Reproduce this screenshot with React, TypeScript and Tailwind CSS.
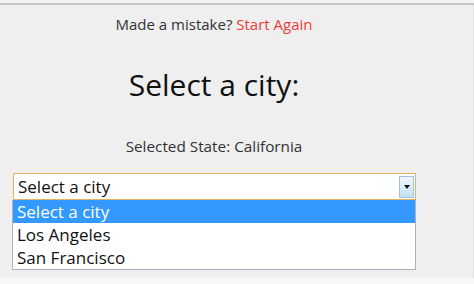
export default function App() {
  const options = ["Select a city", "Los Angeles", "San Francisco"];

  return (
    <div
      className="w-[474px] h-[284px] overflow-hidden bg-[#f7f7f7] text-[#222]"
      style={{ fontFamily: '"Open Sans", "Noto Sans", sans-serif' }}
    >
      <div className="h-[3px] bg-[#f3f3f3]" />
      <div className="h-[2px] bg-[#c4c4c4]" />
      <div className="h-[273px] bg-[#efefef] border-r border-[#e2e2e2]">
        <div className="w-[428px] pt-[9px] text-center">
          <p className="text-[15px] leading-[20px] text-[#333]">
            Made a mistake? <span className="text-[#ee3b3b]">Start Again</span>
          </p>

          <h1 className="mt-[33px] text-[30px] leading-[36px] text-[#111]">
            Select a city:
          </h1>

          <p className="mt-[33px] text-[15.3px] leading-[20px] text-[#333]">
            Selected State: California
          </p>

          <div className="relative mx-[12px] mt-[17px] text-left">
            <div className="ml-px h-[27px] bg-white border border-[#e2b263] flex items-center pl-[4px] pr-px">
              <span className="flex-1 text-[17px] leading-[22px] text-[#111]">
                Select a city
              </span>
              <div className="w-[15px] h-[22px] border border-[#9fc2e6] bg-gradient-to-b from-[#f0f7fe] to-[#c6dff7] flex items-center justify-center">
                <div className="w-0 h-0 border-l-[3.5px] border-r-[3.5px] border-t-[4px] border-l-transparent border-r-transparent border-t-[#111]" />
              </div>
            </div>
            <div className="border border-[#a7b1c0] border-t-0 bg-white">
              {options.map((o, i) => (
                <div
                  key={o}
                  className={`h-[23px] px-[4px] text-[17px] leading-[23px] ${
                    i === 0 ? "bg-[#3399ff] text-white" : "text-[#111]"
                  }`}
                >
                  {o}
                </div>
              ))}
            </div>
          </div>
        </div>
      </div>
    </div>
  );
}
